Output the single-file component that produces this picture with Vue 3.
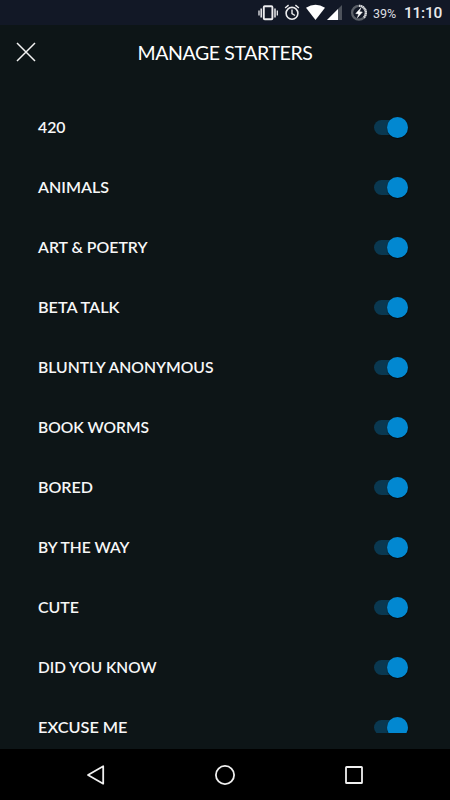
<script setup>
import { ref } from 'vue'

const starters = ref([
  { name: '420', width: 27.500 },
  { name: 'ANIMALS', width: 71 },
  { name: 'ART & POETRY', width: 109.500 },
  { name: 'BETA TALK', width: 81.500 },
  { name: 'BLUNTLY ANONYMOUS', width: 175.500 },
  { name: 'BOOK WORMS', width: 111 },
  { name: 'BORED', width: 55 },
  { name: 'BY THE WAY', width: 91.500 },
  { name: 'CUTE', width: 41 },
  { name: 'DID YOU KNOW', width: 118.500 },
  { name: 'EXCUSE ME', width: 89.500 },
].map((s) => ({ ...s, on: true })))
</script>

<template>
  <div class="screen">
    <header class="status">
      <svg class="status-icons" width="120" height="25" viewBox="0 0 120 25">
        <g fill="none" stroke="#ececee" stroke-width="1.6">
          <rect x="13.8" y="6.3" width="8.6" height="13" rx="1" stroke-width="1.9" />
          <path d="M11.2 8.4v9M25 8.4v9" stroke-width="1.5" />
          <path d="M9 10.5v5M27.3 10.5v5" stroke-width="1.3" />
          <circle cx="42" cy="13.3" r="5.9" />
          <path d="M42 9.5v4.2l3 1.8M35.1 8l3.5-2.9M48.9 8l-3.5-2.9" stroke-width="1.4" />
        </g>
        <path d="M56 7.7Q65.500 2 75 7.700L65.500 20Z" fill="#fff" />
        <path d="M92 5v15H77Z" fill="#4d525b" />
        <path d="M88 9v11H77Z" fill="#fff" />
        <circle cx="109" cy="12.700" r="6.900" fill="none" stroke="#5c6169" stroke-width="2.300" />
        <path d="M109 5.800a6.900 6.900 0 0 1 4.600 12" fill="none" stroke="#dcdde0" stroke-width="2.300" stroke-dasharray="1.400 .4" />
        <path d="M110.800 8l-5 5.500 3 .4-1.400 3.800 5-5.600-3-.4Z" fill="#fff" stroke="#fff" stroke-width=".5" />
      </svg>
      <span class="battery">39%</span>
      <span class="clock">11:10</span>
    </header>
    <div class="titlebar">
      <button class="close" aria-label="Close">
        <svg width="20" height="20" viewBox="0 0 20 20"><path d="M1 1l18 18M19 1L1 19" stroke="#f4f4f4" stroke-width="1.500" /></svg>
      </button>
      <h1>MANAGE STARTERS</h1>
    </div>
    <main class="list">
      <div v-for="s in starters" :key="s.name" class="row">
        <svg class="label" width="220" height="24">
          <text x="0" y="17.500" :textLength="s.width" lengthAdjust="spacingAndGlyphs">{{ s.name }}</text>
        </svg>
        <button class="toggle" :class="{ off: !s.on }" role="switch" :aria-checked="s.on" :aria-label="s.name" @click="s.on = !s.on">
          <span class="knob"></span>
        </button>
      </div>
    </main>
    <nav class="nav">
      <svg width="20" height="22" viewBox="0 0 20 22"><path d="M17.200 2.300v17.400L2 11Z" /></svg>
      <svg width="22" height="22" viewBox="0 0 22 22"><circle cx="11" cy="11" r="9.100" /></svg>
      <svg width="20" height="22" viewBox="0 0 20 22"><rect x="2" y="3" width="16" height="16" rx=".6" /></svg>
    </nav>
  </div>
</template>

<style>
body { margin: 0; background: #0d1517; }
</style>

<style scoped>
.screen {
  width: 450px;
  height: 800px;
  display: flex;
  flex-direction: column;
  overflow: hidden;
  background: #0d1517;
  color: #fff;
  font-family: Lato, "Liberation Sans", sans-serif;
}
.status {
  flex: none;
  height: 25px;
  box-sizing: border-box;
  padding-left: 250px;
  display: flex;
  align-items: center;
  background: #121826;
  font-family: Roboto, sans-serif;
  line-height: 25px;
}
.status-icons { display: block; flex: none; }
.battery { width: 34px; padding-left: 3px; box-sizing: border-box; font-size: 12.500px; color: #dedfe1; padding-top: 1px; }
.clock { font-size: 15.500px; font-weight: 500; letter-spacing: -.25px; color: #e9eaec; padding-top: 2px; }
.titlebar {
  flex: none;
  height: 53px;
  display: grid;
  grid-template-columns: 50px 1fr 50px;
  align-items: center;
}
.close { border: 0; background: none; padding: 0; margin-left: 16px; width: 20px; height: 20px; cursor: pointer; }
.close svg { display: block; }
h1 { margin: 0; font-size: 19.500px; font-weight: 400; line-height: 26px; letter-spacing: -.4px; text-align: center; padding-top: 2px; }
.list { flex: none; height: 655px; padding-top: 19px; box-sizing: border-box; overflow: hidden; }
.row { height: 60px; padding: 0 42px 0 38px; display: flex; align-items: center; justify-content: space-between; }
.label { display: block; overflow: visible; fill: #f7f7f7; font-size: 15.500px; font-weight: 600; }
.toggle {
  width: 34px;
  height: 15px;
  border: 0;
  padding: 0;
  border-radius: 8px;
  background: #0a3850;
  display: flex;
  align-items: center;
  justify-content: flex-end;
  cursor: pointer;
}
.toggle.off { justify-content: flex-start; }
.knob { flex: none; width: 21px; height: 21px; border-radius: 50%; background: #0288d1; box-shadow: 0 1px 1px rgba(0, 0, 0, .6); }
.nav {
  flex: none;
  height: 51px;
  margin-top: auto;
  box-sizing: border-box;
  padding: 0 86px;
  background: #000;
  display: flex;
  align-items: center;
  justify-content: space-between;
}
.nav svg { fill: none; stroke: #f0f0f0; stroke-width: 1.800; stroke-linejoin: round; }
</style>
